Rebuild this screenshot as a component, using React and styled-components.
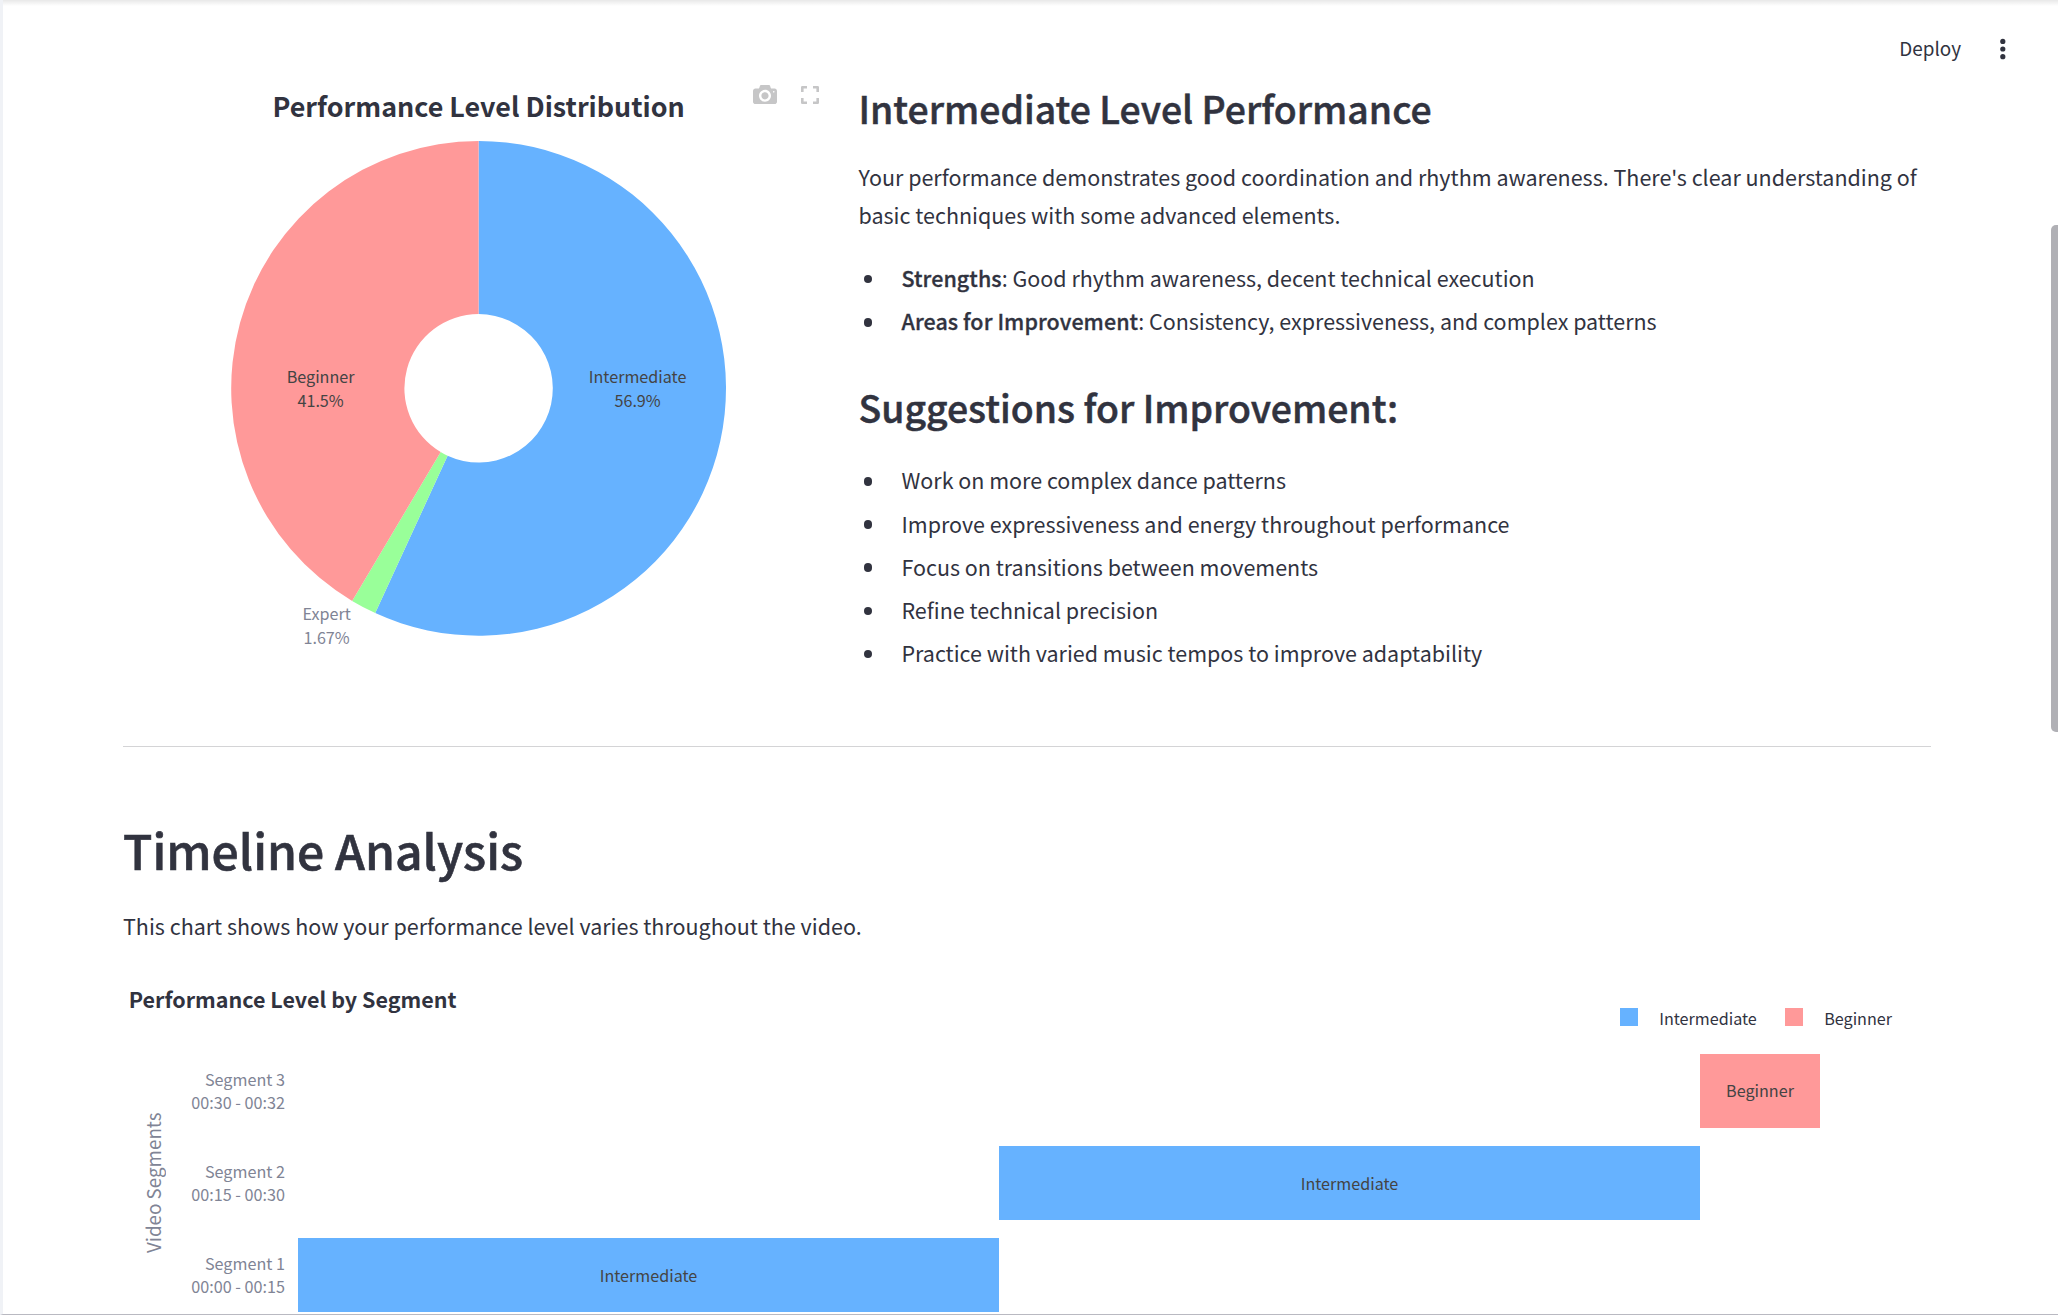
import React from "react";
import styled, { createGlobalStyle } from "styled-components";

const COLORS = {
  text: "#31333f",
  muted: "#808495",
  label: "#444444",
  Intermediate: "#66b2ff",
  Beginner: "#ff9999",
  Expert: "#99ff99",
};

const GlobalStyle = createGlobalStyle`
  *, *::before, *::after { box-sizing: border-box; }
  body {
    margin: 0;
    background: #ffffff;
    color: ${COLORS.text};
    font-family: "Noto Sans CJK SC", "Noto Sans", sans-serif;
    overflow: hidden;
  }
  h2, h3, p, ul { margin: 0; padding: 0; }
`;

const Page = styled.div`
  position: relative;
  height: 1315px;
  overflow: hidden;
  border-left: 3px solid #f0f2f6;
  border-bottom: 1px solid #b9b9c1;
`;

const TopShade = styled.div`
  position: absolute;
  inset: 0 0 auto -3px;
  height: 6px;
  background: linear-gradient(rgba(0, 0, 0, 0.09), rgba(0, 0, 0, 0));
`;

const ScrollThumb = styled.div`
  position: absolute;
  top: 225px;
  right: 0;
  width: 7px;
  height: 507px;
  border-radius: 5px 0 0 5px;
  background: #b0b0b5;
`;

const Header = styled.header`
  display: flex;
  justify-content: flex-end;
  align-items: flex-start;
  gap: 30px;
  height: 80px;
  padding: 34px 43px 0 0;
`;

const DeployButton = styled.button`
  padding: 0;
  border: 0;
  background: none;
  color: inherit;
  font: 400 18.9px/28px "Noto Sans CJK SC", "Noto Sans", sans-serif;
`;

const MenuIcon = styled.svg`
  display: block;
  width: 24px;
  height: 30px;
  fill: ${COLORS.text};
`;

const Content = styled.main`
  width: 1808px;
  margin-left: 120px;
`;

const Summary = styled.section`
  display: grid;
  grid-template-columns: 711.5px 1fr;
  column-gap: 24px;
  height: 666px;
`;

const Figure = styled.div`
  position: relative;
`;

const PieSvg = styled.svg`
  display: block;
  font-family: "Noto Sans CJK SC", "Noto Sans", sans-serif;
`;

const PieTitle = styled.text`
  font-size: 26.9px;
  font-weight: 700;
  fill: ${COLORS.text};
  text-anchor: middle;
`;

const PieLabel = styled.text`
  font-size: 16.15px;
  fill: ${(p) => (p.$outside ? COLORS.muted : COLORS.label)};
  text-anchor: middle;
`;

const ModeBar = styled.div`
  position: absolute;
  top: 5px;
  right: 16px;
  display: flex;
  align-items: flex-start;
  gap: 24px;
  color: #c6c6c7;
`;

const Feedback = styled.div`
  padding-top: 5px;
`;

const Heading = styled.h3`
  font-size: 37.38px;
  line-height: 47px;
  font-weight: 500;
  -webkit-text-stroke: 0.5px ${COLORS.text};
`;

const Paragraph = styled.p`
  font-size: 21.49px;
  line-height: 38.4px;
`;

const FeedbackText = styled(Paragraph)`
  margin-top: 26px;
`;

const List = styled.ul`
  display: flex;
  flex-direction: column;
  gap: 4.8px;
  margin: ${(p) => p.$margin};
  list-style: none;
`;

const Item = styled.li`
  display: flex;
  align-items: flex-start;
  font-size: 21.48px;
  line-height: 38.4px;

  &::before {
    content: "";
    flex: none;
    width: 8.6px;
    height: 8.6px;
    margin: 15.6px 29.2px 0 5.2px;
    border-radius: 50%;
    background: ${COLORS.text};
  }
`;

const Strong = styled.strong`
  font-weight: 500;
  letter-spacing: 0.07px;
  -webkit-text-stroke: 0.3px ${COLORS.text};
`;

const Divider = styled.hr`
  height: 1px;
  margin: 0;
  border: 0;
  background: #d4d4d6;
`;

const Timeline = styled.section`
  padding-top: 73px;
`;

const SectionTitle = styled.h2`
  margin-bottom: 28.6px;
  font-size: 48.1px;
  line-height: 58px;
  font-weight: 500;
  -webkit-text-stroke: 0.6px ${COLORS.text};
`;

const ChartHeader = styled.div`
  display: flex;
  justify-content: space-between;
  align-items: flex-start;
  height: 71.4px;
  margin-top: 37.6px;
  padding: 0 39px 0 5.8px;
`;

const ChartTitle = styled.div`
  font-size: 21.5px;
  line-height: 32px;
  font-weight: 700;
`;

const Legend = styled.div`
  display: flex;
  gap: 28.4px;
  padding-top: 23.4px;
`;

const LegendItem = styled.div`
  display: flex;
  gap: 21px;
  font-size: 16.15px;
  line-height: 24px;

  &::before {
    content: "";
    width: 18px;
    height: 18px;
    margin-top: 2.5px;
    background: ${(p) => p.$color};
  }
`;

const Plot = styled.div`
  display: flex;
  color: ${COLORS.muted};
`;

const AxisTitle = styled.div`
  width: 28px;
  margin: 0 1px 0 15.5px;
  font-size: 18.8px;
  line-height: 28px;
  text-align: center;
  writing-mode: vertical-rl;
  transform: rotate(180deg);
`;

const Rows = styled.div`
  display: flex;
  flex-direction: column;
  gap: 18px;
`;

const Row = styled.div`
  display: grid;
  grid-template-columns: 117.5px 13px 701px 701px 120px;
  height: 74px;
`;

const Tick = styled.div`
  align-self: center;
  font-size: 16.2px;
  line-height: 23.3px;
  text-align: right;
`;

const Bar = styled.div`
  grid-row: 1;
  grid-column: ${(p) => p.$column};
  display: flex;
  align-items: center;
  justify-content: center;
  padding-bottom: ${(p) => (p.$level === "Beginner" ? 1 : 0)}px;
  background: ${(p) => COLORS[p.$level]};
  color: ${COLORS.label};
  font-size: 16.15px;
  line-height: 24px;
`;

const CX = 355.6;
const CY = 308.3;
const R = 247.4;
const HOLE = 74.2;

const SLICES = [
  { level: "Intermediate", from: 0, to: 0.5686 },
  { level: "Expert", from: 0.5686, to: 0.5854 },
  { level: "Beginner", from: 0.5854, to: 1 },
];

const PIE_LABELS = [
  { name: "Beginner", value: "41.5%", x: 197.6, y: 303 },
  { name: "Intermediate", value: "56.9%", x: 514.6, y: 303 },
  { name: "Expert", value: "1.67%", x: 203.6, y: 540, outside: true },
];

const SEGMENTS = [
  { name: "Segment 3", time: "00:30 - 00:32", level: "Beginner", column: 5 },
  { name: "Segment 2", time: "00:15 - 00:30", level: "Intermediate", column: 4 },
  { name: "Segment 1", time: "00:00 - 00:15", level: "Intermediate", column: 3 },
];

const SUGGESTIONS = [
  "Work on more complex dance patterns",
  "Improve expressiveness and energy throughout performance",
  "Focus on transitions between movements",
  "Refine technical precision",
  "Practice with varied music tempos to improve adaptability",
];

function point(radius, t) {
  const a = t * Math.PI * 2;
  return `${CX + radius * Math.sin(a)} ${CY - radius * Math.cos(a)}`;
}

function slicePath({ from, to }) {
  const large = to - from > 0.5 ? 1 : 0;
  return `M${point(R, from)}A${R} ${R} 0 ${large} 1 ${point(R, to)}L${point(HOLE, to)}A${HOLE} ${HOLE} 0 ${large} 0 ${point(HOLE, from)}Z`;
}

function CameraIcon() {
  return (
    <svg width="24" height="19.2" viewBox="0 0 1000 800" fill="currentColor">
      <path
        transform="matrix(1 0 0 -1 0 750)"
        d="m500 450c-83 0-150-67-150-150 0-83 67-150 150-150 83 0 150 67 150 150 0 83-67 150-150 150z m400 150h-120c-16 0-34 13-39 29l-31 93c-6 15-23 28-40 28h-340c-16 0-34-13-39-28l-31-94c-6-15-23-28-40-28h-120c-55 0-100-45-100-100v-450c0-55 45-100 100-100h800c55 0 100 45 100 100v450c0 55-45 100-100 100z m-400-550c-138 0-250 112-250 250 0 138 112 250 250 250 138 0 250-112 250-250 0-138-112-250-250-250z m365 380c-19 0-35 16-35 35 0 19 16 35 35 35 19 0 35-16 35-35 0-19-16-35-35-35z"
      />
    </svg>
  );
}

function FullscreenIcon() {
  return (
    <svg
      width="18"
      height="20"
      viewBox="0 -1 18 20"
      fill="none"
      stroke="currentColor"
      strokeWidth="2.6"
      strokeLinejoin="round"
    >
      <path d="M1.3 6V1.3H6M12 1.3h4.7V6M16.7 12v4.7H12M6 16.7H1.3V12" />
    </svg>
  );
}

function PieChart() {
  return (
    <Figure>
      <PieSvg width="711" height="600" viewBox="0 0 711 600">
        <PieTitle x={CX} y="37">Performance Level Distribution</PieTitle>
        {SLICES.map((s) => (
          <path key={s.level} d={slicePath(s)} fill={COLORS[s.level]} />
        ))}
        {PIE_LABELS.map((l) => (
          <PieLabel key={l.name} $outside={l.outside}>
            <tspan x={l.x} y={l.y}>{l.name}</tspan>
            <tspan x={l.x} y={l.y + 24}>{l.value}</tspan>
          </PieLabel>
        ))}
      </PieSvg>
      <ModeBar>
        <CameraIcon />
        <FullscreenIcon />
      </ModeBar>
    </Figure>
  );
}

function TimelineChart() {
  return (
    <>
      <ChartHeader>
        <ChartTitle>Performance Level by Segment</ChartTitle>
        <Legend>
          <LegendItem $color={COLORS.Intermediate}>Intermediate</LegendItem>
          <LegendItem $color={COLORS.Beginner}>Beginner</LegendItem>
        </Legend>
      </ChartHeader>
      <Plot>
        <AxisTitle>Video Segments</AxisTitle>
        <Rows>
          {SEGMENTS.map((s) => (
            <Row key={s.name}>
              <Tick>
                {s.name}
                <br />
                {s.time}
              </Tick>
              <Bar $column={s.column} $level={s.level}>{s.level}</Bar>
            </Row>
          ))}
        </Rows>
      </Plot>
    </>
  );
}

export default function App() {
  return (
    <>
      <GlobalStyle />
      <Page>
        <Header>
          <DeployButton>Deploy</DeployButton>
          <MenuIcon viewBox="0 0 24 30">
            <circle cx="11.8" cy="7.4" r="2.6" />
            <circle cx="11.8" cy="15" r="2.6" />
            <circle cx="11.8" cy="22.7" r="2.6" />
          </MenuIcon>
        </Header>
        <Content>
          <Summary>
            <PieChart />
            <Feedback>
              <Heading>Intermediate Level Performance</Heading>
              <FeedbackText>
                Your performance demonstrates good coordination and rhythm awareness. There's clear understanding of
                basic techniques with some advanced elements.
              </FeedbackText>
              <List $margin="24.4px 0 43.2px">
                <Item>
                  <span><Strong>Strengths</Strong>: Good rhythm awareness, decent technical execution</span>
                </Item>
                <Item>
                  <span><Strong>Areas for Improvement</Strong>: Consistency, expressiveness, and complex patterns</span>
                </Item>
              </List>
              <Heading>Suggestions for Improvement:</Heading>
              <List $margin="30.4px 0 0">
                {SUGGESTIONS.map((s) => (
                  <Item key={s}>{s}</Item>
                ))}
              </List>
            </Feedback>
          </Summary>
          <Divider />
          <Timeline>
            <SectionTitle>Timeline Analysis</SectionTitle>
            <Paragraph>This chart shows how your performance level varies throughout the video.</Paragraph>
            <TimelineChart />
          </Timeline>
        </Content>
        <TopShade />
        <ScrollThumb />
      </Page>
    </>
  );
}
